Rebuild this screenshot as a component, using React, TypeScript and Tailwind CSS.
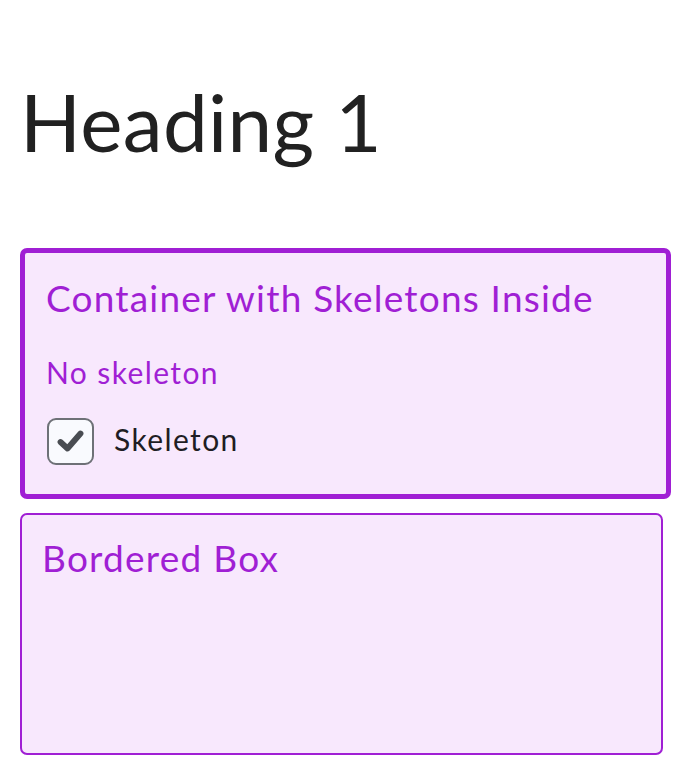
export default function App() {
  return (
    <div className="min-h-screen bg-white pl-[20px] font-['Lato',sans-serif]">
      <h1 className="pt-[81px] text-[80px] leading-[80px] font-normal tracking-[0.35px] text-[#212121]">
        Heading 1
      </h1>

      <div className="mt-[87px] w-[651px] rounded-[7px] border-[5px] border-[#a01fd4] bg-[#f8e8fd] pt-[26px] pl-[21px] pb-[29px]">
        <h2 className="text-[37px] leading-[37px] tracking-[1.2px] text-[#a01fd4]">Container with Skeletons Inside</h2>
        <p className="mt-[41px] text-[30px] leading-[30px] tracking-[1.4px] text-[#a01fd4]">No skeleton</p>
        <label className="mt-[31px] flex items-start gap-[20px]">
          <span className="ml-px flex h-[47px] w-[47px] items-center justify-center rounded-[9px] border-2 border-[#6e7177] bg-[#f9fafe]">
            <svg width="27" height="23" viewBox="0 0 27 23" fill="none" stroke="#494c52" strokeWidth="5.8" strokeLinecap="round" strokeLinejoin="round">
              <path d="M3.5 12L10.5 18.5L23.5 3.5" />
            </svg>
          </span>
          <span className="mt-[6px] text-[30px] leading-[30px] tracking-[1.4px] text-[#1f1d24]">Skeleton</span>
        </label>
      </div>

      <div className="mt-[14px] h-[242px] w-[643px] rounded-[7px] border-2 border-[#a01fd4] bg-[#f8e8fd] pt-[24px] pl-[20px]">
        <h2 className="text-[37px] leading-[37px] tracking-[1.25px] text-[#a01fd4]">Bordered Box</h2>
      </div>
    </div>
  );
}
